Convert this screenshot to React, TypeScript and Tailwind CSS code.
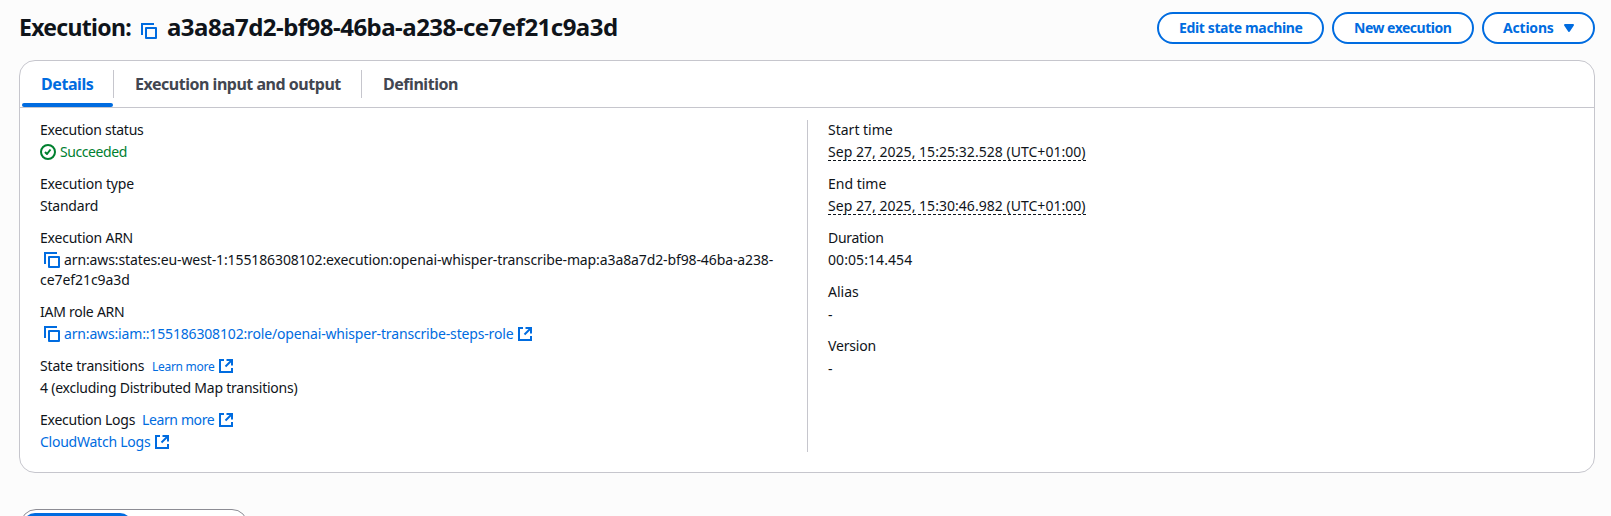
import type { ReactNode } from "react";

function CopyIcon() {
  return (
    <svg width="16" height="16" viewBox="0 0 16 16" fill="none" stroke="currentColor" strokeWidth="2" className="shrink-0">
      <path d="M15 5H5v10h10V5Z" strokeLinejoin="round" />
      <path d="M1 12V1h12" />
    </svg>
  );
}

function ExternalIcon() {
  return (
    <svg width="16" height="16" viewBox="0 0 16 16" fill="none" stroke="currentColor" strokeWidth="2" className="shrink-0">
      <path d="M6 2H2v12h12v-4" />
      <path d="M8.5 2H14v5.5" />
      <path d="M14 2 7.5 8.5" />
    </svg>
  );
}

function CheckIcon() {
  return (
    <svg width="16" height="16" viewBox="0 0 16 16" fill="none" stroke="currentColor" strokeWidth="2" className="shrink-0">
      <circle cx="8" cy="8" r="7" />
      <path d="m5 8 2 2 3.5-4.5" strokeLinejoin="round" />
    </svg>
  );
}

function Field({ label, children }: { label: ReactNode; children: ReactNode }) {
  return (
    <div>
      <div className="mb-0.5 flex h-5 items-center whitespace-nowrap">{label}</div>
      <div className="min-h-5 whitespace-nowrap">{children}</div>
    </div>
  );
}

const button =
  "flex h-8 items-center rounded-full border-2 border-[#006ce0] bg-white text-[14px] font-bold leading-5 text-[#006ce0] whitespace-nowrap";
const link = "text-[#006ce0]";

export default function App() {
  return (
    <div className="h-[516px] overflow-hidden bg-[#fcfcfc] pl-[19px] pr-4 pt-3 font-['Noto_Sans',sans-serif] text-[14px] leading-5 text-[#0f141a]">
      <header className="flex h-8 items-center justify-between">
        <h1 className="flex items-center pb-0.5 text-[24px] font-bold leading-[30px] whitespace-nowrap">
          <span className="w-[122px] text-[23px] tracking-[-0.7px]">Execution:</span>
          <span className="mr-[10px] mt-2 text-[#006ce0]">
            <CopyIcon />
          </span>
          <span className="tracking-[-0.52px]">a3a8a7d2-bf98-46ba-a238-ce7ef21c9a3d</span>
        </h1>
        <div className="flex gap-2">
          <button className={`${button} w-[167px] pl-5 tracking-[-0.37px]`}>Edit state machine</button>
          <button className={`${button} w-[142px] pl-5 tracking-[-0.5px]`}>New execution</button>
          <button className={`${button} w-[113px] pl-[19px] tracking-[-0.2px]`}>
            <span className="w-[58px] text-left">Actions</span>
            <svg width="16" height="16" viewBox="0 0 16 16" fill="currentColor" stroke="currentColor" strokeWidth="2" strokeLinejoin="round">
              <path d="M4 5h8l-4 6-4-6Z" />
            </svg>
          </button>
        </div>
      </header>

      <section className="mt-4 h-[413px] rounded-[16px] border border-[#c6c6cd] bg-white">
        <nav className="flex h-[47px] border-b border-[#c6c6cd] pl-0.5 text-[16px] font-bold text-[#424650]">
          <div className="flex w-[91px] flex-col justify-between text-[#006ce0]">
            <span className="pl-[19px] pt-[13px] tracking-[-0.43px]">Details</span>
            <span className="h-1 rounded-full bg-[#006ce0]" />
          </div>
          <div className="mt-[9px] h-7 w-px bg-[#c6c6cd]" />
          <div className="w-[247px] pl-[21px] pt-[13px] tracking-[-0.48px] whitespace-nowrap">Execution input and output</div>
          <div className="mt-[9px] h-7 w-px bg-[#c6c6cd]" />
          <div className="pl-[21px] pt-[13px] tracking-[-0.46px]">Definition</div>
        </nav>

        <div className="flex px-5 pt-3">
          <div className="flex w-[767px] flex-col gap-3">
            <Field label={<span className="tracking-[-0.26px]">Execution status</span>}>
              <span className="flex items-center gap-1 text-[#00802f]">
                <CheckIcon />
                <span className="tracking-[-0.42px]">Succeeded</span>
              </span>
            </Field>
            <Field label={<span className="tracking-[-0.17px]">Execution type</span>}>
              <span className="tracking-[-0.22px]">Standard</span>
            </Field>
            <Field label={<span className="tracking-[-0.22px]">Execution ARN</span>}>
              <div className="flex items-center gap-1 pl-1">
                <span className={link}>
                  <CopyIcon />
                </span>
                <span className="tracking-[-0.11px]">
                  arn:aws:states:eu-west-1:155186308102:execution:openai-whisper-transcribe-map:a3a8a7d2-bf98-46ba-a238-
                </span>
              </div>
              <div className="tracking-[-0.06px]">ce7ef21c9a3d</div>
            </Field>
            <Field label={<span className="tracking-[-0.25px]">IAM role ARN</span>}>
              <a className={`${link} flex items-center gap-1 pl-1`}>
                <CopyIcon />
                <span className="tracking-[-0.16px]">arn:aws:iam::155186308102:role/openai-whisper-transcribe-steps-role</span>
                <ExternalIcon />
              </a>
            </Field>
            <Field
              label={
                <>
                  <span className="w-28 tracking-[-0.17px]">State transitions</span>
                  <a className={`${link} flex items-center`}>
                    <span className="w-[66px] pt-px text-[12px] tracking-[-0.28px]">Learn more</span>
                    <ExternalIcon />
                  </a>
                </>
              }
            >
              <span className="tracking-[-0.233px]">4 (excluding Distributed Map transitions)</span>
            </Field>
            <Field
              label={
                <>
                  <span className="w-[102px] tracking-[-0.26px]">Execution Logs</span>
                  <a className={`${link} flex items-center`}>
                    <span className="w-[76px] tracking-[-0.38px]">Learn more</span>
                    <ExternalIcon />
                  </a>
                </>
              }
            >
              <a className={`${link} flex items-center`}>
                <span className="w-[114px] tracking-[-0.24px]">CloudWatch Logs</span>
                <ExternalIcon />
              </a>
            </Field>
          </div>
          <div className="w-px bg-[#c6c6cd]" />
          <div className="flex flex-col gap-3 pl-5">
            <Field label="Start time">
              <span className="inline-block h-[19px] border-b border-dashed border-[#0f141a] tracking-[0.03px]">
                Sep 27, 2025, 15:25:32.528 (UTC+01:00)
              </span>
            </Field>
            <Field label="End time">
              <span className="inline-block h-[19px] border-b border-dashed border-[#0f141a] tracking-[0.03px]">
                Sep 27, 2025, 15:30:46.982 (UTC+01:00)
              </span>
            </Field>
            <Field label={<span className="tracking-[-0.3px]">Duration</span>}>
              <span className="tracking-[0.08px]">00:05:14.454</span>
            </Field>
            <Field label="Alias">
              <span className="block h-5 pt-px">-</span>
            </Field>
            <Field label={<span className="tracking-[-0.18px]">Version</span>}>
              <span className="block h-5 pt-px">-</span>
            </Field>
          </div>
        </div>
      </section>

      <div className="mt-9 ml-px flex h-9 w-[228px] rounded-[16px] border border-[#8c8c94] bg-white p-[3px] pl-0.5">
        <div className="w-[109px] rounded-[12px] bg-[#006ce0]" />
      </div>
    </div>
  );
}
